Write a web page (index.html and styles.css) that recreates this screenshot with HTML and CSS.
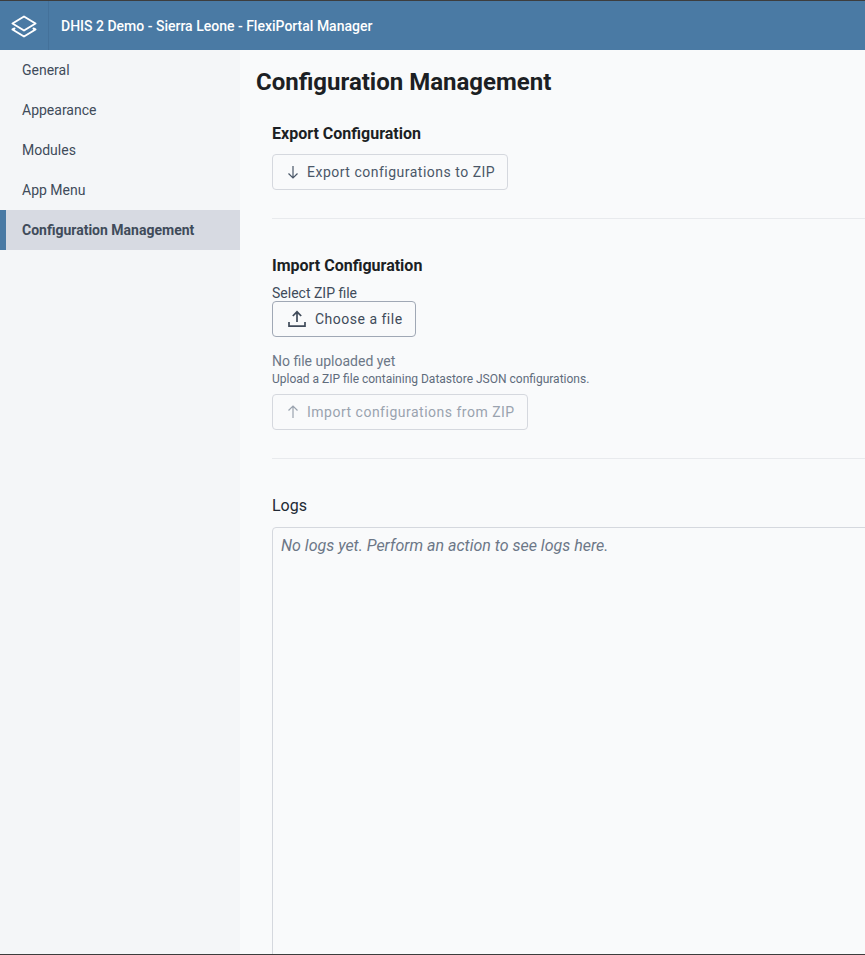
FILE: index.html
```html
<!DOCTYPE html>
<html lang="en">
<head>
  <meta charset="UTF-8" />
  <title>FlexiPortal Manager</title>
  <link rel="stylesheet" href="styles.css">
</head>
<body>
  <header class="topbar">
    <div class="logo">
      <svg width="28" height="24" viewBox="0 0 28 24" fill="none" stroke="#fff" stroke-width="2" stroke-linejoin="round" stroke-linecap="round">
        <path d="M14 2.5 L25.5 9.5 L14 16.5 L2.5 9.5 Z" />
        <path d="M4.5 14.5 L2.5 15.5 L14 22.5 L25.5 15.5 L23.5 14.5" />
      </svg>
    </div>
    <div class="app-title">DHIS 2 Demo - Sierra Leone - FlexiPortal Manager</div>
  </header>

  <div class="layout">
    <nav class="sidebar">
      <a class="nav-item">General</a>
      <a class="nav-item">Appearance</a>
      <a class="nav-item">Modules</a>
      <a class="nav-item">App Menu</a>
      <a class="nav-item active">Configuration Management</a>
    </nav>

    <main class="content">
      <h1>Configuration Management</h1>

      <section class="section export-section">
        <h2>Export Configuration</h2>
        <button class="btn">
          <svg class="btn-arrow" width="16" height="16" viewBox="0 0 16 16" fill="none" stroke="currentColor" stroke-width="1.2">
            <path d="M8 2 V14 M3.5 9.5 L8 14 L12.5 9.5" />
          </svg>
          Export configurations to ZIP
        </button>
      </section>

      <hr class="divider" />

      <section class="section import-section">
        <h2>Import Configuration</h2>
        <div class="field-label">Select ZIP file</div>
        <button class="btn btn-file">
          <svg width="20" height="20" viewBox="0 0 20 20" fill="none" stroke="currentColor" stroke-width="1.7">
            <path d="M10 13 V3 M5.8 7 L10 2.8 L14.2 7" />
            <path d="M2 13 V17.2 H18 V13" />
          </svg>
          Choose a file
        </button>
        <div class="file-status">No file uploaded yet</div>
        <div class="file-help">Upload a ZIP file containing Datastore JSON configurations.</div>
        <button class="btn" disabled>
          <svg class="btn-arrow" width="16" height="16" viewBox="0 0 16 16" fill="none" stroke="currentColor" stroke-width="1.2">
            <path d="M8 14 V2 M3.5 6.5 L8 2 L12.5 6.5" />
          </svg>
          Import configurations from ZIP
        </button>
      </section>

      <hr class="divider" />

      <section class="logs-section">
        <div class="logs-label">Logs</div>
        <div class="logs-box">No logs yet. Perform an action to see logs here.</div>
      </section>
    </main>
  </div>
</body>
</html>
```

FILE: styles.css
```css
* {
  box-sizing: border-box;
}

html, body {
  height: 100%;
}

body {
  margin: 0;
  display: flex;
  flex-direction: column;
  overflow: hidden;
  font-family: Roboto, sans-serif;
  background: #f9fafb;
  border-top: 1px solid #3d3d3d;
  border-bottom: 1px solid #3d3d3d;
  color: #212934;
}

.topbar {
  display: flex;
  align-items: center;
  height: 49px;
  flex-shrink: 0;
  background: #4a7aa4;
  color: #fff;
}

.logo {
  display: flex;
  align-items: center;
  justify-content: center;
  width: 49px;
  height: 100%;
  border-right: 1px solid #44719a;
}

.app-title {
  padding-left: 12px;
  font-size: 14px;
  font-weight: 500;
}

.layout {
  display: flex;
  flex: 1;
  min-height: 0;
}

.sidebar {
  width: 240px;
  flex-shrink: 0;
  background: #f4f6f8;
}

.nav-item {
  display: flex;
  align-items: center;
  height: 40px;
  padding-left: 22px;
  font-size: 14px;
  color: #404b5a;
}

.nav-item.active {
  padding-left: 16px;
  border-left: 6px solid #4a7aa4;
  background: #d7dae2;
  font-weight: 700;
}

.content {
  flex: 1;
  min-width: 0;
  padding: 16px 0 0 16px;
}

h1 {
  margin: 0 0 26px;
  font-size: 24px;
  line-height: 32px;
  font-weight: 700;
  color: #1c1f24;
}

.section,
.logs-section {
  margin-left: 16px;
}

h2 {
  margin: 0 0 10px;
  font-size: 16px;
  line-height: 20px;
  font-weight: 700;
  color: #1c1f24;
}

.btn {
  display: inline-flex;
  align-items: center;
  gap: 6px;
  height: 36px;
  padding: 0 12px;
  font-family: inherit;
  font-size: 14px;
  letter-spacing: 0.5px;
  color: #4a5768;
  background: transparent;
  border: 1px solid #d5d8de;
  border-radius: 4px;
}

.btn:disabled {
  color: #9aa3af;
}

.btn-file {
  gap: 8px;
  padding: 0 12px 0 14px;
  border-color: #a0a8b5;
  color: #404b5a;
}

.divider {
  height: 1px;
  margin: 0 0 0 16px;
  border: 0;
  background: #e8eaed;
}

.export-section {
  padding-bottom: 28px;
}

.import-section {
  padding: 37px 0 28px;
}

.import-section h2 {
  margin-bottom: 9px;
}

.field-label {
  font-size: 14px;
  line-height: 16px;
  color: #404b5a;
}

.file-status {
  margin-top: 16px;
  font-size: 14px;
  line-height: 16px;
  color: #6c7787;
}

.file-help {
  margin: 3px 0 8px;
  font-size: 12px;
  line-height: 14px;
  color: #606c7c;
}

.logs-section {
  padding-top: 37px;
}

.logs-label {
  margin-bottom: 11px;
  font-size: 16px;
  line-height: 20px;
  color: #212934;
}

.logs-box {
  height: 600px;
  margin-right: -8px;
  padding: 8px;
  border: 1px solid #d5d8de;
  border-radius: 4px;
  font-size: 16px;
  line-height: 19px;
  font-style: italic;
  color: #6c7787;
}
```
